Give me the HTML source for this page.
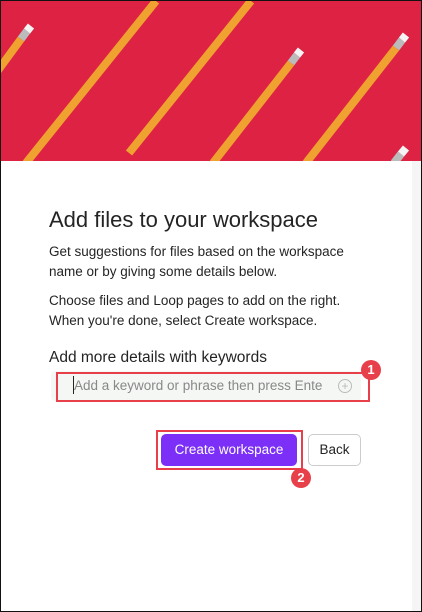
<!DOCTYPE html>
<html><head><style>
body{margin:0;width:422px;height:612px;overflow:hidden;background:#fff;font-family:"Liberation Sans",sans-serif}
.frame{position:absolute;left:0;top:0;width:420px;height:610px;border:1px solid #111;overflow:hidden;background:#fff}
.strip{position:absolute;left:411px;top:160px;width:10px;height:452px;background:#f5f5f5}
h1{position:absolute;left:48px;top:206px;margin:0;font-size:22px;font-weight:normal;color:#242424}
p{position:absolute;left:48px;margin:0;font-size:13.5px;line-height:20px;color:#242424}
.lbl{position:absolute;left:48px;top:348px;font-size:15.5px;color:#242424}
.inp{position:absolute;left:50px;top:370px;width:310px;height:30px;background:#f5f7f5;border-radius:4px}
.box1{position:absolute;left:55px;top:371px;width:310px;height:26px;border:2px solid #e8404a}
.ph{position:absolute;left:73px;top:377px;font-size:13.5px;color:#888}
.cur{position:absolute;left:72px;top:375px;width:1px;height:18px;background:#222}
.plus{position:absolute;left:337px;top:378px;width:12px;height:12px;border:1px solid #bbb;border-radius:50%;color:#bbb;font-size:12px;line-height:12px;text-align:center}
.badge{position:absolute;width:20px;height:20px;border-radius:50%;background:#e8404a;color:#fff;font-size:13px;font-weight:bold;text-align:center;line-height:20px}
.create{position:absolute;left:160px;top:433px;width:136px;height:32px;background:#7b2ff7;border-radius:5px;color:#fff;font-size:13.5px;text-align:center;line-height:32px}
.box2{position:absolute;left:155px;top:429px;width:143px;height:36px;border:2px solid #e8404a}
.back{position:absolute;left:307px;top:433px;width:51px;height:30px;border:1px solid #ccc;border-radius:5px;font-size:13.5px;text-align:center;line-height:30px;color:#242424}
</style></head><body><div class="frame">
<svg width="422" height="160" style="position:absolute;left:0;top:0">
<rect width="422" height="160" fill="#de2244"/>
<g stroke="#f0a230" stroke-width="8" stroke-linecap="butt">
<line x1="-5" y1="72" x2="20" y2="38"/>
<line x1="25" y1="162" x2="155" y2="0"/>
<line x1="128" y1="152" x2="250" y2="0"/>
<line x1="212" y1="162" x2="290" y2="62"/>
<line x1="305" y1="162" x2="395" y2="47"/>
</g>
<g stroke="#bbb" stroke-width="8"><line x1="20" y1="38" x2="26" y2="30"/><line x1="290" y1="62" x2="296" y2="54"/><line x1="395" y1="47" x2="401" y2="39"/><line x1="393" y1="162" x2="400" y2="153"/></g>
<g stroke="#f4f4f4" stroke-width="8"><line x1="26" y1="30" x2="30" y2="25"/><line x1="296" y1="54" x2="300" y2="49"/><line x1="401" y1="39" x2="405" y2="34"/><line x1="400" y1="153" x2="405" y2="147"/></g>
</svg>
<div class="strip"></div>
<h1>Add files to your workspace</h1>
<p style="top:241px">Get suggestions for files based on the workspace<br>name or by giving some details below.</p>
<p style="top:290px">Choose files and Loop pages to add on the right.<br>When you're done, select Create workspace.</p>
<div class="lbl">Add more details with keywords</div>
<div class="inp"></div>
<div class="ph">Add a keyword or phrase then press Ente</div>
<div class="cur"></div>
<div class="plus">+</div>
<div class="box1"></div>
<div class="badge" style="left:360px;top:359px">1</div>
<div class="create">Create workspace</div>
<div class="box2"></div>
<div class="badge" style="left:290px;top:467px">2</div>
<div class="back">Back</div>
</div></body></html>
